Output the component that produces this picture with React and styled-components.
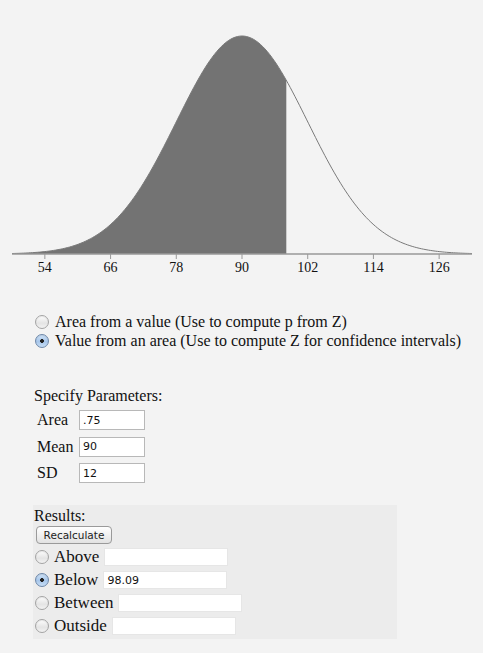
import React from "react";
import styled, { createGlobalStyle } from "styled-components";

const MEAN = 90;
const SD = 12;
const CUT = 98.09;
const LO = MEAN - 3.5 * SD;
const HI = MEAN + 3.5 * SD;
const X0 = 12;
const X1 = 472;
const BASE = 254;
const PEAK = 218;

const sx = (v) => X0 + ((v - LO) * (X1 - X0)) / (HI - LO);
const sy = (v) => {
    const z = (v - MEAN) / SD;
    return BASE - PEAK * Math.exp(-(z * z) / 2);
};

function curvePath(from, to, close) {
    const pts = [];
    const steps = 200;
    for (let i = 0; i <= steps; i++) {
        const v = from + ((to - from) * i) / steps;
        pts.push(`${sx(v).toFixed(2)},${sy(v).toFixed(2)}`);
    }
    let d = "M" + pts.join(" L");
    if (close) d += ` L${sx(to).toFixed(2)},${BASE} L${sx(from).toFixed(2)},${BASE} Z`;
    return d;
}

const GlobalStyle = createGlobalStyle`
    body{
        margin: 0;
        background: #f3f3f3;
        font-family: "Liberation Serif", "Times New Roman", serif;
        color: #111;
    }
`;

const Page = styled.div`
    width: 483px;
    min-height: 653px;
    background: #f3f3f3;
`;

const Chart = styled.svg`
    display: block;
    width: 483px;
    height: 300px;
`;

const ModeGroup = styled.div`
    display: flex;
    flex-direction: column;
    padding-left: 35px;
    margin-top: 12px;
`;

const ModeRow = styled.label`
    display: flex;
    align-items: center;
    gap: 6px;
    height: 19px;
    font-size: 16px;
`;

const Radio = styled.span`
    flex: none;
    width: 12px;
    height: 12px;
    margin-right: ${(p) => p.$gap || 0}px;
    border-radius: 50%;
    border: 1px solid ${(p) => (p.checked ? "#6d87a8" : "#a4a4a4")};
    background: ${(p) =>
        p.checked
            ? "radial-gradient(circle at 50% 50%, #222 0 1.6px, transparent 2.2px), linear-gradient(#cfe3f7, #a7c6ea 55%, #c6ddf5)"
            : "linear-gradient(#fdfdfd, #e4e4e4 60%, #f2f2f2)"};
    box-shadow: inset 0 1px 1px rgba(0,0,0,0.08);
`;

const Params = styled.div`
    display: flex;
    flex-direction: column;
    padding-left: 34px;
    margin-top: 36px;
`;

const Heading = styled.div`
    font-size: 16px;
    height: 19px;
    line-height: 19px;
`;

const ParamRow = styled.div`
    display: grid;
    grid-template-columns: 42px 66px;
    align-items: center;
    height: 26.5px;
    padding-left: 3px;
    font-size: 16px;
    &:nth-of-type(2){
        margin-top: 2px;
    }
`;

const ParamInput = styled.input`
    box-sizing: border-box;
    width: 66px;
    height: 20px;
    border: 1px solid #b8b8b8;
    background: #fff;
    font-family: "DejaVu Sans", sans-serif;
    font-size: 11px;
    padding: 0 3px;
    color: #111;
`;

const Results = styled.div`
    display: flex;
    flex-direction: column;
    align-items: flex-start;
    width: 363px;
    margin: 18px 0 0 33px;
    padding: 1px 0 1px 1px;
    background: #ececec;
`;

const Button = styled.button`
    box-sizing: border-box;
    margin: 1px 0 2px 2px;
    width: 76px;
    height: 18px;
    padding: 0;
    border: 1px solid #9a9a9a;
    border-radius: 4px;
    background: linear-gradient(#ffffff, #f0f0f0 50%, #e2e2e2);
    font-family: "DejaVu Sans", sans-serif;
    font-size: 10.5px;
    color: #222;
`;

const ResultRow = styled.label`
    display: flex;
    align-items: center;
    height: 23px;
    padding-left: 1px;
    font-size: 17px;
`;

const ResultInput = styled.input`
    box-sizing: border-box;
    width: 124px;
    height: 18px;
    margin-left: 5px;
    border: 1px solid #e6e6e6;
    background: #fff;
    font-family: "DejaVu Sans", sans-serif;
    font-size: 11px;
    padding: 0 3px;
    color: #111;
`;

const ticks = [54, 66, 78, 90, 102, 114, 126];

function Curve() {
    return (
        <Chart viewBox="0 0 483 300">
            <path d={curvePath(LO, CUT, true)} fill="#737373" stroke="none" />
            <path d={curvePath(LO, HI, false)} fill="none" stroke="#7a7a7a" strokeWidth="1" />
            <line x1={X0} y1={BASE} x2={X1} y2={BASE} stroke="#999" strokeWidth="1.6" />
            {ticks.map((t) => (
                <g key={t}>
                    <line x1={sx(t)} y1={BASE} x2={sx(t)} y2={BASE + 5} stroke="#999" strokeWidth="1" />
                    <text
                        x={sx(t)}
                        y={BASE + 18}
                        textAnchor="middle"
                        fontFamily="Liberation Serif, serif"
                        fontSize="14"
                        fill="#111"
                    >
                        {t}
                    </text>
                </g>
            ))}
        </Chart>
    );
}

export default function App() {
    return (
        <Page>
            <GlobalStyle />
            <Curve />
            <ModeGroup>
                <ModeRow>
                    <Radio />
                    Area from a value (Use to compute p from Z)
                </ModeRow>
                <ModeRow>
                    <Radio checked />
                    Value from an area (Use to compute Z for confidence intervals)
                </ModeRow>
            </ModeGroup>
            <Params>
                <Heading>Specify Parameters:</Heading>
                <ParamRow>
                    <span>Area</span>
                    <ParamInput defaultValue=".75" />
                </ParamRow>
                <ParamRow>
                    <span>Mean</span>
                    <ParamInput defaultValue="90" />
                </ParamRow>
                <ParamRow>
                    <span>SD</span>
                    <ParamInput defaultValue="12" />
                </ParamRow>
            </Params>
            <Results>
                <Heading>Results:</Heading>
                <Button>Recalculate</Button>
                <ResultRow>
                    <Radio $gap={5} />
                    Above
                    <ResultInput defaultValue="" />
                </ResultRow>
                <ResultRow>
                    <Radio $gap={5} checked />
                    Below
                    <ResultInput defaultValue="98.09" />
                </ResultRow>
                <ResultRow>
                    <Radio $gap={5} />
                    Between
                    <ResultInput defaultValue="" />
                </ResultRow>
                <ResultRow>
                    <Radio $gap={5} />
                    Outside
                    <ResultInput defaultValue="" />
                </ResultRow>
            </Results>
        </Page>
    );
}
